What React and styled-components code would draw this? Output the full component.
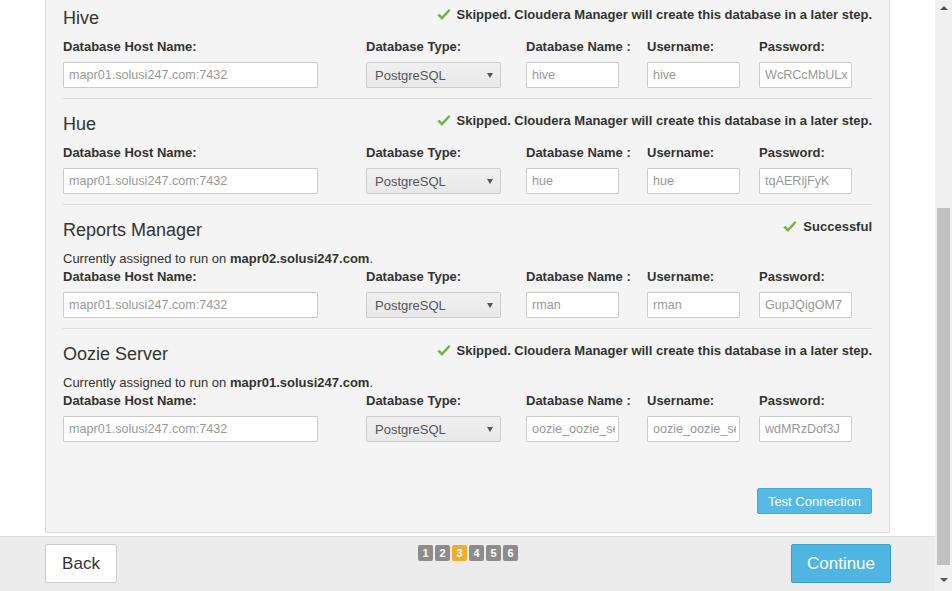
import React from 'react';
import styled, {createGlobalStyle, css} from 'styled-components'

const GlobalStyle=createGlobalStyle`
html,body{margin:0;padding:0;overflow:hidden;}
body{font-family:"Liberation Sans", Arial, sans-serif;color:#333;}
`

const Page=styled.div`
display:flex;
width:952px;
height:591px;
`

const Main=styled.div`
display:flex;
flex-direction:column;
width:935px;
height:591px;
background:#fff;
`

const Content=styled.div`
height:536px;
overflow:hidden;
padding-left:45px;
`

const Panel=styled.div`
box-sizing:border-box;
width:845px;
height:533px;
background:#f4f4f4;
border:1px solid #dcdcdc;
border-top:none;
padding:7px 17px 0 17px;
display:flex;
flex-direction:column;
`

const Section=styled.div`
padding-bottom:10px;
margin-bottom:14px;
${({last})=>last ? css`margin-bottom:0;` : css`border-bottom:1px solid #ddd;`}
`

const Header=styled.div`
display:flex;
justify-content:space-between;
align-items:flex-start;
`

const Title=styled.h3`
margin:0;
font-size:18px;
line-height:22px;
font-weight:normal;
color:#333;
`

const Status=styled.div`
display:flex;
align-items:center;
gap:6px;
margin-top:-1px;
font-size:13px;
line-height:18px;
font-weight:bold;
color:#333;
`

const Note=styled.div`
margin-top:9px;
font-size:13px;
line-height:18px;
color:#333;
b{font-weight:bold;}
`

const Grid=styled.div`
display:grid;
grid-template-columns:303px 160px 121px 112px 93px;
margin-top:${({tight})=>tight ? '0' : '9px'};
`

const Label=styled.div`
font-size:13px;
line-height:18px;
font-weight:bold;
color:#333;
margin-bottom:6px;
`

const Input=styled.input`
box-sizing:border-box;
width:${({w})=>w}px;
height:26px;
margin:0;
padding:0 3px 0 5px;
border:1px solid #ccc;
border-radius:1px;
background:#fff;
font-family:"Liberation Sans", Arial, sans-serif;
font-size:12.6px;
color:#999;
outline:none;
`

const Select=styled.div`
box-sizing:border-box;
width:135px;
height:26px;
display:flex;
align-items:center;
justify-content:space-between;
padding:0 7px 0 8px;
border:1px solid #ccc;
border-radius:2px;
background:linear-gradient(#f0f0f0,#e8e8e8);
font-size:13px;
color:#555;
`

const Caret=styled.span`
width:0;
height:0;
border-left:3px solid transparent;
border-right:3px solid transparent;
border-top:5px solid #555;
`

const Actions=styled.div`
margin-top:auto;
display:flex;
justify-content:flex-end;
padding-bottom:18px;
`

const InfoButton=styled.button`
box-sizing:border-box;
width:115px;
height:26px;
border:1px solid #46a8d6;
border-radius:2px;
background:#55b9e5;
color:#fff;
font-family:"Liberation Sans", Arial, sans-serif;
font-size:13px;
padding:0;
`

const Footer=styled.div`
box-sizing:border-box;
height:55px;
border-top:1px solid #ddd;
background:#ececec;
display:grid;
grid-template-columns:1fr auto 1fr;
align-items:start;
padding:7px 44px 0 45px;
`

const NavButton=styled.button`
box-sizing:border-box;
height:39px;
border-radius:2px;
font-family:"Liberation Sans", Arial, sans-serif;
font-size:17px;
padding:0;
${({primary})=>primary ? css`
width:100px;
justify-self:end;
background:#4fb5e2;
border:1px solid #3b9fcc;
color:#fff;
` : css`
width:72px;
justify-self:start;
background:#fff;
border:1px solid #ccc;
color:#333;
`}
`

const Steps=styled.div`
display:flex;
gap:2px;
margin-top:1px;
`

const Step=styled.span`
width:15px;
height:16px;
border-radius:2px;
background:${({active})=>active ? '#f0ad2c' : '#8c8c8c'};
color:#fff;
font-size:11px;
font-weight:bold;
line-height:16px;
text-align:center;
`

const Scrollbar=styled.div`
width:17px;
height:591px;
background:#f0f0f0;
display:flex;
flex-direction:column;
align-items:center;
`

const Arrow=styled.span`
width:0;
height:0;
border-left:4px solid transparent;
border-right:4px solid transparent;
${({down})=>down ? css`border-top:4px solid #505050;margin-top:13px;` : css`border-bottom:4px solid #505050;margin-top:6px;`}
`

const Thumb=styled.div`
width:13px;
height:357px;
margin-top:198px;
background:#c1c1c1;
`

function Check() {
    return (
        <svg width="14" height="12" viewBox="0 0 14 12">
            <path d="M1 6.5 L5 10.5 L13 1.5 L11.8 0.6 L5 7.8 L2.3 5.1 Z" fill="#72b342" stroke="#72b342" strokeWidth="1" strokeLinejoin="round"/>
        </svg>
    )
}

const SKIP='Skipped. Cloudera Manager will create this database in a later step.'

const sections=[
    {title:'Hive', status:SKIP, db:'hive', user:'hive', pass:'WcRCcMbULx'},
    {title:'Hue', status:SKIP, db:'hue', user:'hue', pass:'tqAERijFyK'},
    {title:'Reports Manager', status:'Successful', host:'mapr02.solusi247.com', db:'rman', user:'rman', pass:'GupJQigOM7'},
    {title:'Oozie Server', status:SKIP, host:'mapr01.solusi247.com', db:'oozie_oozie_server', user:'oozie_oozie_server', pass:'wdMRzDof3J'},
]

function DbSection({s, last}) {
    return (
        <Section last={last}>
            <Header>
                <Title>{s.title}</Title>
                <Status><Check/>{s.status}</Status>
            </Header>
            {s.host && <Note>Currently assigned to run on <b>{s.host}</b>.</Note>}
            <Grid tight={!!s.host}>
                <Label>Database Host Name:</Label>
                <Label>Database Type:</Label>
                <Label>Database Name :</Label>
                <Label>Username:</Label>
                <Label>Password:</Label>
                <Input w={255} readOnly value="mapr01.solusi247.com:7432"/>
                <Select>PostgreSQL<Caret/></Select>
                <Input w={93} readOnly value={s.db}/>
                <Input w={93} readOnly value={s.user}/>
                <Input w={93} readOnly value={s.pass}/>
            </Grid>
        </Section>
    )
}

export default function App() {
    return (
        <Page>
            <GlobalStyle/>
            <Main>
                <Content>
                    <Panel>
                        {sections.map((s,i)=>(
                            <DbSection key={s.title} s={s} last={i===sections.length-1}/>
                        ))}
                        <Actions>
                            <InfoButton>Test Connection</InfoButton>
                        </Actions>
                    </Panel>
                </Content>
                <Footer>
                    <NavButton>Back</NavButton>
                    <Steps>
                        {[1,2,3,4,5,6].map(n=>(
                            <Step key={n} active={n===3}>{n}</Step>
                        ))}
                    </Steps>
                    <NavButton primary>Continue</NavButton>
                </Footer>
            </Main>
            <Scrollbar>
                <Arrow/>
                <Thumb/>
                <Arrow down/>
            </Scrollbar>
        </Page>
    );
}
